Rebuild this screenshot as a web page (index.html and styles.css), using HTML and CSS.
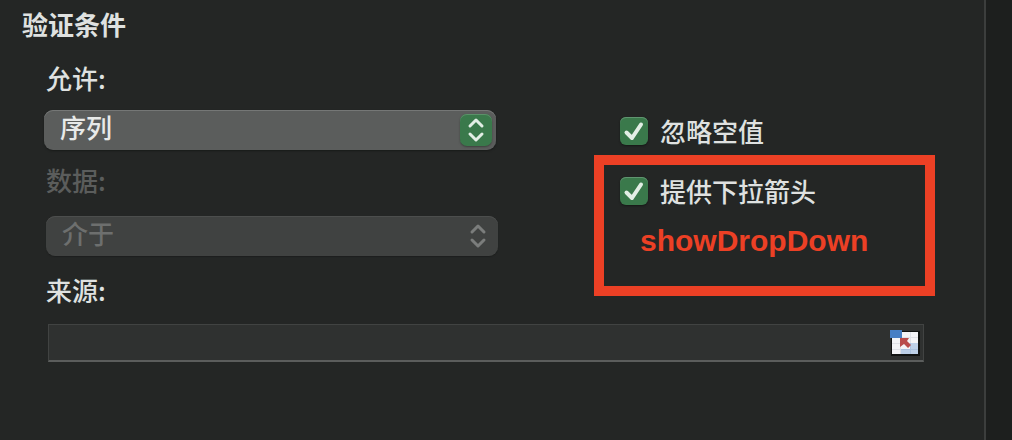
FILE: index.html
```html
<!DOCTYPE html>
<html lang="zh-CN">
<head>
<meta charset="utf-8">
<title>验证条件</title>
<link rel="stylesheet" href="styles.css">
</head>
<body>
<main class="panel">
  <h1 class="title">验证条件</h1>
  <form class="form">
    <div class="fields">
      <label class="label" for="allow">允许:</label>
      <div class="picker">
        <select class="select" id="allow"><option>序列</option></select>
        <span class="stepper">
          <svg width="32" height="32" viewBox="0 0 32 32"><path d="M10 12 16 6l6 6M10 20l6 6 6-6"/></svg>
        </span>
      </div>
      <label class="label label-disabled" for="data">数据:</label>
      <div class="picker picker-disabled">
        <select class="select" id="data" disabled><option>介于</option></select>
        <span class="stepper">
          <svg width="32" height="32" viewBox="0 0 32 32"><path d="M10 12 16 6l6 6M10 20l6 6 6-6"/></svg>
        </span>
      </div>
      <label class="label label-source" for="source">来源:</label>
    </div>
    <div class="options">
      <label class="check">
        <span class="tick"><input type="checkbox" checked><svg width="28" height="28" viewBox="0 0 28 28"><path d="M6.500 15.500 12 21 21 7.500"/></svg></span>
        忽略空值
      </label>
      <div class="callout">
        <label class="check">
          <span class="tick"><input type="checkbox" checked><svg width="28" height="28" viewBox="0 0 28 28"><path d="M6.500 15.500 12 21 21 7.500"/></svg></span>
          提供下拉箭头
        </label>
        <p class="note">showDropDown</p>
      </div>
    </div>
    <div class="source">
      <input class="source-input" id="source" type="text">
      <button class="range" type="button" aria-label="选择区域">
        <svg width="30" height="27" viewBox="0 0 30 27">
          <path fill="#111312" d="M1 1h29v25H1z"/>
          <path fill="#f3f4f7" d="M2 2h26v22H2z"/>
          <path fill="none" stroke="#dfe1e7" d="M2 13.500h26M2 19.500h26M10.500 8v16M20.500 2v22M12 7.500h16"/>
          <path fill="#bdd0e8" d="M20 13h8v11H11v-5h9z"/>
          <path fill="none" stroke="#abc2df" d="M11 19.500h17M20.500 13v11"/>
          <path fill="#467fc5" d="M0 0h12v8H0z"/>
          <path fill="#b94c4c" d="M10 8h9l-2 3 4 4-3 3-4-4-4 3z"/>
        </svg>
      </button>
    </div>
  </form>
</main>
<aside class="edge"></aside>
</body>
</html>
```
FILE: styles.css
```css
* {
  box-sizing: border-box;
}

body {
  display: flex;
  min-height: 100vh;
  margin: 0;
  background: #242625;
  color: #dfe1e0;
  font: 500 26px/32px "Noto Sans CJK SC", sans-serif;
}

.panel {
  flex: 1;
  padding: 8px 49px 24px 22px;
}

.edge {
  width: 28px;
  border-left: 2px solid #3c3e3d;
  background: #1d1f1e;
}

.title {
  margin: 0 0 22px;
  font-size: 26px;
  font-weight: bold;
  line-height: 32px;
}

.form {
  display: grid;
  grid-template-columns: 454fr 341fr;
  column-gap: 96px;
  row-gap: 18px;
  padding-left: 22px;
}

.fields,
.options {
  display: flex;
  flex-direction: column;
}

.label {
  margin: 0 2px 16px;
}

.label-disabled {
  margin: 14px 2px 20px;
  color: #5b5d5c;
}

.label-source {
  margin: 18px 2px 0;
}

.picker {
  position: relative;
  margin-right: 2px;
}

.picker-disabled {
  margin: 0 0 0 2px;
}

.select {
  display: block;
  appearance: none;
  width: 100%;
  height: 40px;
  padding: 0 48px 6px 16px;
  border: 0;
  border-radius: 9px;
  background: #5b5d5c;
  box-shadow: inset 0 1px #757776, 0 1px 2px #181a19;
  color: #e8eae9;
  font: inherit;
}

.select:disabled {
  background: #404241;
  box-shadow: inset 0 1px #4c4e4d, 0 1px 1px #1d1f1e;
  color: #6d6f6e;
  opacity: 1;
}

.stepper {
  position: absolute;
  top: 4px;
  right: 4px;
  width: 32px;
  height: 32px;
  border-radius: 7px;
  background: #3a794b;
  box-shadow: inset 0 1px #5b9169, 0 1px 2px #3d403e;
  pointer-events: none;
}

.picker-disabled .stepper {
  background: none;
  box-shadow: none;
}

.stepper svg,
.tick svg {
  display: block;
  fill: none;
  stroke: #e2eee5;
  stroke-width: 3;
  stroke-linecap: round;
  stroke-linejoin: round;
  pointer-events: none;
}

.picker-disabled svg {
  stroke: #7b7d7c;
}

.options {
  gap: 8px;
  padding-top: 53px;
}

.check {
  display: flex;
  align-items: center;
  gap: 12px;
  padding-left: 26px;
}

.tick {
  display: grid;
}

.tick > * {
  grid-area: 1 / 1;
}

.tick svg {
  z-index: 1;
  stroke-width: 4;
}

.tick input {
  appearance: none;
  width: 28px;
  height: 28px;
  margin: 0;
  border-radius: 6px;
  background: #3a794b;
  box-shadow: inset 0 1px #609570, 0 1px 2px #161817;
}

.callout {
  padding: 10px 16px 29px;
  border: 10px solid #ec4025;
}

.callout .check {
  padding-left: 0;
}

.note {
  margin: 18px 0 0 20px;
  color: #ec4025;
  font-family: "Liberation Sans", sans-serif;
  font-size: 30px;
  font-weight: bold;
}

.source {
  display: flex;
  grid-column: 1 / -1;
  align-items: center;
  height: 38px;
  margin: 0 11px 0 4px;
  padding: 2px 3px 0 0;
  border: 1px solid #414342;
  border-bottom: 2px solid #5b5d5c;
  background: #2f3130;
}

.source-input {
  flex: 1;
  min-width: 0;
  height: 32px;
  padding: 0 8px;
  border: 0;
  outline: 0;
  background: none;
  color: inherit;
  font: inherit;
}

.range {
  padding: 0;
  border: 0;
  background: none;
}

.range svg {
  display: block;
}
```
